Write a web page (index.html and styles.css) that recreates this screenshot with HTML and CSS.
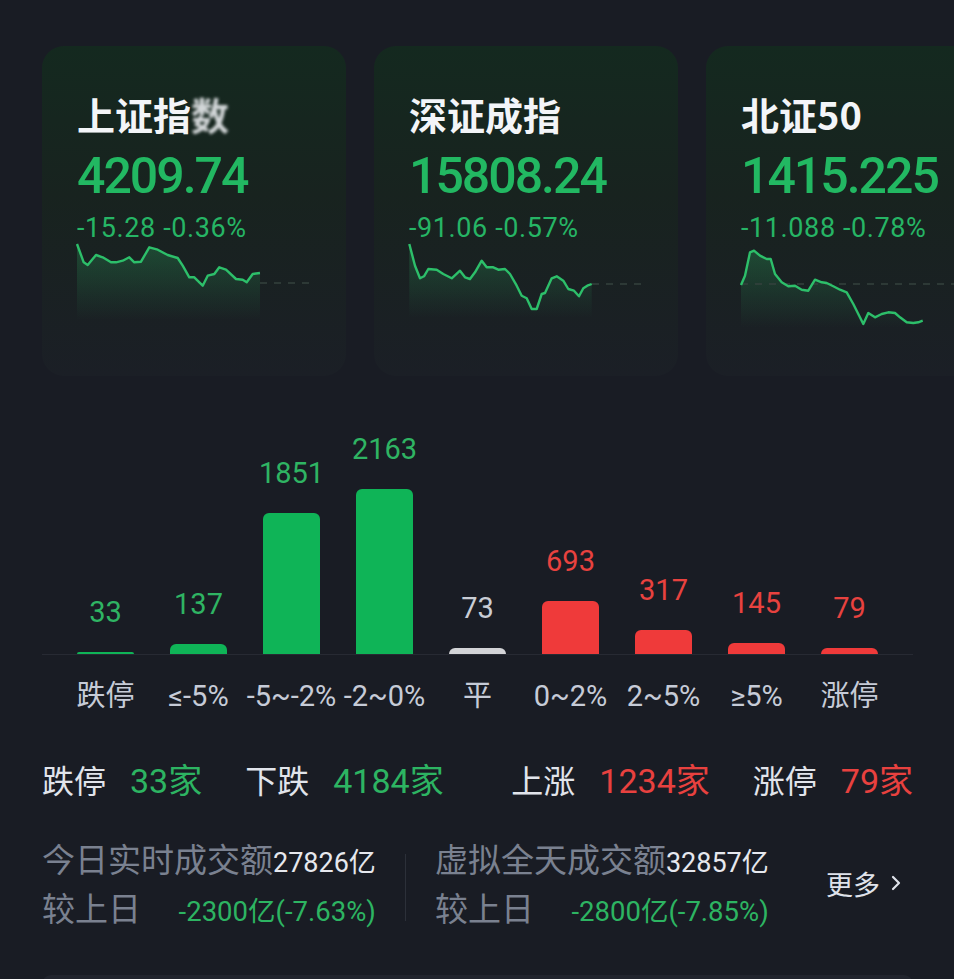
FILE: index.html
```html
<!DOCTYPE html>
<html>
<head>
    <meta charset="utf-8">
    <title>市场概览</title>
    <link rel="stylesheet" href="styles.css">
</head>
<body>
    <div class="page">
        <div class="cards">
            <div class="card">
                <div class="card-title">上证指<span class="blur">数</span></div>
                <div class="card-price">4209.74</div>
                <div class="card-change">-15.28 -0.36%</div>
                <svg class="spark" width="234" height="84" viewBox="0 0 234 84">
                    <defs>
                        <linearGradient id="fill1" x1="0" y1="0" x2="0" y2="1">
                            <stop offset="0" stop-color="#2dbf6a" stop-opacity="0.26"/>
                            <stop offset="1" stop-color="#2dbf6a" stop-opacity="0"/>
                        </linearGradient>
                    </defs>
                    <polygon fill="url(#fill1)" points="0,0 6.7,18.3 10.7,21 19,11 25.7,13.3 34,18.3 39,18.3 45.7,16.7 52.3,13.3 57.3,18.3 64,17.7 72.3,3.3 80.7,5.7 90.7,11 100.7,14 105.7,21.7 112.3,33.3 117.3,33.3 125.7,41.7 130.7,31.7 137.3,30 142.3,23.3 149,25.7 159,35 165.7,35.7 169.7,38.3 175.7,30 183,29 183,76 0,76"/>
                    <line class="dash" x1="183" y1="39" x2="234" y2="39"/>
                    <polyline class="line" points="0,0 6.7,18.3 10.7,21 19,11 25.7,13.3 34,18.3 39,18.3 45.7,16.7 52.3,13.3 57.3,18.3 64,17.7 72.3,3.3 80.7,5.7 90.7,11 100.7,14 105.7,21.7 112.3,33.3 117.3,33.3 125.7,41.7 130.7,31.7 137.3,30 142.3,23.3 149,25.7 159,35 165.7,35.7 169.7,38.3 175.7,30 183,29"/>
                </svg>
            </div>
            <div class="card">
                <div class="card-title">深证成指</div>
                <div class="card-price">15808.24</div>
                <div class="card-change">-91.06 -0.57%</div>
                <svg class="spark" width="234" height="84" viewBox="0 0 234 84">
                    <defs>
                        <linearGradient id="fill2" x1="0" y1="0" x2="0" y2="1">
                            <stop offset="0" stop-color="#2dbf6a" stop-opacity="0.26"/>
                            <stop offset="1" stop-color="#2dbf6a" stop-opacity="0"/>
                        </linearGradient>
                    </defs>
                    <polygon fill="url(#fill2)" points="0.3,0 6,21.7 11,34.3 15,32.3 19.3,25 27.7,25.7 34.3,30 42.7,34.3 51,26.7 56,33.3 61,35 66,28.3 72.7,16.7 77.7,23.3 84.3,23.3 89.3,25.7 96,25 101,30 107.7,41.7 112.7,51.7 117.7,54.3 122.7,65 127.7,65 132.7,50 136,49 142.7,34.3 147.7,32.3 154.3,36.7 159.3,45 165,46.7 170,52.3 174.3,44.3 178.3,41.7 182.7,40 182.7,74 0.3,74"/>
                    <line class="dash" x1="183" y1="40" x2="234" y2="40"/>
                    <polyline class="line" points="0.3,0 6,21.7 11,34.3 15,32.3 19.3,25 27.7,25.7 34.3,30 42.7,34.3 51,26.7 56,33.3 61,35 66,28.3 72.7,16.7 77.7,23.3 84.3,23.3 89.3,25.7 96,25 101,30 107.7,41.7 112.7,51.7 117.7,54.3 122.7,65 127.7,65 132.7,50 136,49 142.7,34.3 147.7,32.3 154.3,36.7 159.3,45 165,46.7 170,52.3 174.3,44.3 178.3,41.7 182.7,40"/>
                </svg>
            </div>
            <div class="card">
                <div class="card-title">北证50</div>
                <div class="card-price">1415.225</div>
                <div class="card-change">-11.088 -0.78%</div>
                <svg class="spark" width="234" height="84" viewBox="0 0 234 84">
                    <defs>
                        <linearGradient id="fill3" x1="0" y1="0" x2="0" y2="1">
                            <stop offset="0" stop-color="#2dbf6a" stop-opacity="0.26"/>
                            <stop offset="1" stop-color="#2dbf6a" stop-opacity="0"/>
                        </linearGradient>
                    </defs>
                    <polygon fill="url(#fill3)" points="0,41 4,31.7 9,8.3 13,6.7 19,11.7 25.7,15 29.7,15 34,30 40.7,38.3 47.3,42.3 54,41.7 60.7,45.7 67.3,46.7 74,35.7 80.7,38.3 85.7,39 92.3,42.3 99,45.7 105.7,48.3 112.3,60 117.3,70 122.3,80 127.3,69 134,73.3 140.7,70 147.3,68.3 154,69 159,73.3 165.7,78.3 172.3,79 177.3,78.3 181.7,76.7 181.7,84 0,84"/>
                    <line class="dash" x1="0" y1="40" x2="234" y2="40"/>
                    <polyline class="line" points="0,41 4,31.7 9,8.3 13,6.7 19,11.7 25.7,15 29.7,15 34,30 40.7,38.3 47.3,42.3 54,41.7 60.7,45.7 67.3,46.7 74,35.7 80.7,38.3 85.7,39 92.3,42.3 99,45.7 105.7,48.3 112.3,60 117.3,70 122.3,80 127.3,69 134,73.3 140.7,70 147.3,68.3 154,69 159,73.3 165.7,78.3 172.3,79 177.3,78.3 181.7,76.7"/>
                </svg>
            </div>
        </div>

        <div class="dist">
            <div class="bars">
                <div class="col down"><div class="num">33</div><div class="bar" style="height: 2.5px"></div></div>
                <div class="col down"><div class="num">137</div><div class="bar" style="height: 10.4px"></div></div>
                <div class="col down"><div class="num">1851</div><div class="bar" style="height: 141.2px"></div></div>
                <div class="col down"><div class="num">2163</div><div class="bar" style="height: 165px"></div></div>
                <div class="col flat"><div class="num">73</div><div class="bar" style="height: 5.6px"></div></div>
                <div class="col up"><div class="num">693</div><div class="bar" style="height: 52.9px"></div></div>
                <div class="col up"><div class="num">317</div><div class="bar" style="height: 24.2px"></div></div>
                <div class="col up"><div class="num">145</div><div class="bar" style="height: 11.1px"></div></div>
                <div class="col up"><div class="num">79</div><div class="bar" style="height: 6px"></div></div>
            </div>
            <div class="axis">
                <div class="tick">跌停</div>
                <div class="tick">≤-5%</div>
                <div class="tick">-5~-2%</div>
                <div class="tick">-2~0%</div>
                <div class="tick">平</div>
                <div class="tick">0~2%</div>
                <div class="tick">2~5%</div>
                <div class="tick">≥5%</div>
                <div class="tick">涨停</div>
            </div>
        </div>

        <div class="summary">
            <div class="group">
                <div class="stat"><span class="stat-label">跌停</span><span class="stat-value green">33家</span></div>
                <div class="stat"><span class="stat-label">下跌</span><span class="stat-value green">4184家</span></div>
            </div>
            <div class="group">
                <div class="stat"><span class="stat-label">上涨</span><span class="stat-value red">1234家</span></div>
                <div class="stat"><span class="stat-label">涨停</span><span class="stat-value red">79家</span></div>
            </div>
        </div>

        <div class="turnover">
            <div class="block">
                <div class="row-top"><span class="t-label">今日实时成交额</span><span class="t-amount">27826亿</span></div>
                <div class="row-bottom"><span class="t-label">较上日</span><span class="t-diff">-2300亿(-7.63%)</span></div>
            </div>
            <div class="divider"></div>
            <div class="block">
                <div class="row-top"><span class="t-label">虚拟全天成交额</span><span class="t-amount">32857亿</span></div>
                <div class="row-bottom"><span class="t-label">较上日</span><span class="t-diff">-2800亿(-7.85%)</span></div>
            </div>
            <div class="more">
                更多
                <svg width="12" height="20" viewBox="0 0 12 20"><path d="M3 4 L9 10 L3 16" fill="none" stroke="#dfe2ea" stroke-width="2.2" stroke-linecap="round" stroke-linejoin="round"/></svg>
            </div>
        </div>

        <div class="next-card"></div>
    </div>
</body>
</html>
```

FILE: styles.css
```css
body {
    margin: 0;
    background: #191c24;
    font-family: Roboto, "Noto Sans CJK SC", sans-serif;
    color: #dfe2ea;
    overflow: hidden;
}

.page {
    width: 871px;
    padding: 46px 0 0 42px;
}

/* index cards */
.cards {
    display: flex;
    gap: 28px;
    margin-right: -41px;
    overflow: hidden;
}

.card {
    flex-shrink: 0;
    width: 304px;
    height: 330px;
    box-sizing: border-box;
    padding: 44px 0 0 35px;
    border-radius: 22px;
    background: linear-gradient(180deg, #14291f 0%, #18231f 45%, #1b1f26 100%);
}

.card-title {
    font-family: "Noto Sans CJK SC", Roboto, sans-serif;
    font-size: 38px;
    font-weight: 700;
    line-height: 48px;
    color: #f3f5f8;
    white-space: nowrap;
}

.blur {
    filter: blur(1.4px);
    opacity: 0.85;
}

.card-price {
    margin-top: 11px;
    font-size: 50px;
    font-weight: 500;
    line-height: 54px;
    letter-spacing: -2px;
    color: #22b862;
    white-space: nowrap;
}

.card-change {
    margin-top: 10px;
    font-size: 27px;
    line-height: 30px;
    letter-spacing: 0.6px;
    color: #26b565;
    white-space: nowrap;
}

.spark {
    display: block;
    margin-top: 1px;
    overflow: visible;
}

.spark .line {
    fill: none;
    stroke: #2dbf6a;
    stroke-width: 2.4;
    stroke-linejoin: round;
}

.spark .dash {
    stroke: #35423e;
    stroke-width: 1.5;
    stroke-dasharray: 7 7;
}

/* distribution chart */
.bars {
    height: 278px;
    display: flex;
    align-items: flex-end;
    padding: 0 17px;
    border-bottom: 1px solid #272a33;
}

.col {
    width: 93px;
    display: flex;
    flex-direction: column;
    align-items: center;
}

.num {
    font-size: 29px;
    line-height: 28px;
    margin-bottom: 26px;
}

.bar {
    width: 57px;
    border-radius: 6px 6px 0 0;
}

.down .num { color: #2fb463; }
.down .bar { background: #0fb457; }
.up .num { color: #e8423f; }
.up .bar { background: #ef3a3a; }
.flat .num { color: #c9cdd5; }
.flat .bar { background: #d2d3d6; }

.axis {
    display: flex;
    padding: 21px 17px 0;
}

.tick {
    width: 93px;
    text-align: center;
    white-space: nowrap;
    font-size: 29px;
    line-height: 40px;
    color: #c6cbd7;
}

/* up / down counts */
.summary {
    display: flex;
    justify-content: space-between;
    margin-top: 45px;
    line-height: 40px;
}

.group {
    display: flex;
    gap: 43px;
}

.stat {
    display: flex;
    align-items: baseline;
    gap: 24px;
    white-space: nowrap;
}

.stat-label {
    font-size: 32px;
    color: #e1e4eb;
}

.stat-value {
    font-size: 34px;
}

.green { color: #2db462; }
.red { color: #e8413f; }

/* turnover */
.turnover {
    display: flex;
    align-items: center;
    margin-top: 36px;
}

.block {
    display: flex;
    flex-direction: column;
}

.row-top,
.row-bottom {
    display: flex;
    align-items: baseline;
    white-space: nowrap;
}

.row-top {
    line-height: 46px;
}

.row-bottom {
    line-height: 48px;
    justify-content: space-between;
}

.t-label {
    font-size: 33px;
    color: #7a8190;
}

.t-amount {
    font-size: 27px;
    color: #e6e8ee;
}

.t-diff {
    font-size: 27.5px;
    color: #2db462;
}

.divider {
    width: 1px;
    height: 67px;
    margin: 0 29px;
    background: #2c3039;
}

.more {
    margin-left: auto;
    margin-right: 11px;
    margin-bottom: 8px;
    display: flex;
    align-items: center;
    gap: 10px;
    font-size: 27px;
    color: #dfe2ea;
}

.more svg {
    display: block;
}

.next-card {
    margin-top: 39px;
    height: 9px;
    border-radius: 24px 24px 0 0;
    background: #21242d;
}
```
